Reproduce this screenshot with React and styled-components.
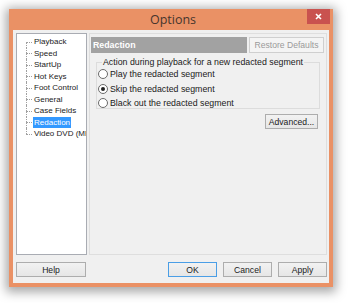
import React from "react";
import styled, { createGlobalStyle } from "styled-components";

const Global = createGlobalStyle`
  html, body { margin: 0; padding: 0; background: #ffffff; }
  body { font-family: "Liberation Sans", Arial, sans-serif; }
`;

const Page = styled.div`
  width: 350px;
  height: 303px;
  padding: 9px 0 0 9px;
  box-sizing: border-box;
  background: #ffffff;
`;

const Window = styled.div`
  width: 324px;
  height: 278px;
  background: #ea9165;
  box-shadow: 0 2px 10px 3px rgba(0, 0, 0, 0.35);
  display: flex;
  flex-direction: column;
  padding: 0 4px 4px 4px;
  box-sizing: border-box;
`;

const TitleBar = styled.div`
  height: 21px;
  position: relative;
  display: flex;
  align-items: center;
  justify-content: center;
  font-family: "Open Sans", "Noto Sans", sans-serif;
  font-size: 12.5px;
  color: #47352d;
  padding-left: 4px;
`;

const CloseBtn = styled.div`
  position: absolute;
  right: -1px;
  top: 0;
  width: 23px;
  height: 15px;
  background: #c9524f;
  color: #fff;
  display: flex;
  align-items: center;
  justify-content: center;
`;

const Client = styled.div`
  flex: 1;
  background: #f0f0f0;
  padding: 3px 2px 6px 3px;
  display: flex;
  flex-direction: column;
  gap: 7px;
`;

const Main = styled.div`
  flex: 1;
  display: flex;
  gap: 2px;
`;

const Tree = styled.div`
  width: 71px;
  box-sizing: border-box;
  background: #fff;
  border: 1px solid #a9acb3;
  padding: 2px 0 0 9px;
  font-size: 8px;
  color: #1a1a1a;
  position: relative;
  overflow: hidden;
`;

const TreeItem = styled.div`
  height: 11.5px;
  display: flex;
  align-items: center;
  position: relative;
  padding-left: 7px;
  white-space: nowrap;
  &::before {
    content: "";
    position: absolute;
    left: 0;
    top: 50%;
    width: 6px;
    border-top: 1px dotted #a0a0a0;
  }
  &::after {
    content: "";
    position: absolute;
    left: 0;
    top: ${(p) => (p.$first ? "50%" : "0")};
    height: ${(p) => (p.$last || p.$first ? "50%" : "100%")};
    border-left: 1px dotted #a0a0a0;
  }
`;

const ItemLabel = styled.span`
  padding: 0 1px;
  line-height: 11px;
  background: ${(p) => (p.$sel ? "#3399ff" : "transparent")};
  color: ${(p) => (p.$sel ? "#fff" : "#1a1a1a")};
`;

const Panel = styled.div`
  flex: 1;
  border: 1px solid #dedede;
  padding: 3px 2px 0 1px;
  display: flex;
  flex-direction: column;
`;

const HeaderRow = styled.div`
  display: flex;
  gap: 2px;
  height: 16px;
`;

const HeaderBar = styled.div`
  flex: 1;
  background: #a2a2a2;
  color: #fff;
  font-weight: bold;
  font-size: 8.8px;
  display: flex;
  align-items: center;
  padding-left: 2px;
`;

const Button = styled.div`
  box-sizing: border-box;
  width: ${(p) => p.$w}px;
  height: ${(p) => p.$h || 16}px;
  border: 1px solid ${(p) => (p.$default ? "#4a9ee6" : p.$disabled ? "#cfcfcf" : "#adadad")};
  background: ${(p) => (p.$disabled ? "#f4f4f4" : "linear-gradient(#f2f2f2, #e6e6e6)")};
  font-size: 8.6px;
  color: ${(p) => (p.$disabled ? "#9a9a9a" : "#1a1a1a")};
  display: flex;
  align-items: center;
  justify-content: center;
  white-space: nowrap;
`;

const Group = styled.fieldset`
  margin: 4px 4px 0 5px;
  border: 1px solid #dcdcdc;
  padding: 0 4px 2px 4px;
  height: 52px;
  box-sizing: border-box;
  font-size: 8.8px;
  color: #1a1a1a;
`;

const Legend = styled.legend`
  padding: 0 1px;
  margin-left: 1px;
`;

const Radio = styled.div`
  display: flex;
  align-items: center;
  height: 14.5px;
  margin-left: -3px;
  gap: 2px;
`;

const Circle = styled.span`
  width: 10px;
  height: 10px;
  border-radius: 50%;
  border: 1px solid #6a6a6a;
  background: #fff;
  box-sizing: border-box;
  display: flex;
  align-items: center;
  justify-content: center;
  &::after {
    content: "";
    width: 4px;
    height: 4px;
    border-radius: 50%;
    background: ${(p) => (p.$on ? "#222" : "transparent")};
  }
`;

const AdvRow = styled.div`
  display: flex;
  justify-content: flex-end;
  padding: 5px 6px 0 0;
`;

const Footer = styled.div`
  display: flex;
  align-items: center;
  gap: 6px;
  height: 15px;
`;

const Spacer = styled.div`
  flex: 1;
`;

const items = [
  "Playback",
  "Speed",
  "StartUp",
  "Hot Keys",
  "Foot Control",
  "General",
  "Case Fields",
  "Redaction",
  "Video DVD (MP",
];

export default function App() {
  return (
    <>
      <Global />
      <Page>
        <Window>
          <TitleBar>
            Options
            <CloseBtn>
              <svg width="7" height="7" viewBox="0 0 7 7">
                <path d="M1 1 L6 6 M6 1 L1 6" stroke="#fff" strokeWidth="1.6" />
              </svg>
            </CloseBtn>
          </TitleBar>
          <Client>
            <Main>
              <Tree>
                {items.map((t, i) => (
                  <TreeItem key={t} $first={i === 0} $last={i === items.length - 1}>
                    <ItemLabel $sel={t === "Redaction"}>{t}</ItemLabel>
                  </TreeItem>
                ))}
              </Tree>
              <Panel>
                <HeaderRow>
                  <HeaderBar>Redaction</HeaderBar>
                  <Button $w={75} $disabled>Restore Defaults</Button>
                </HeaderRow>
                <Group>
                  <Legend>Action during playback for a new redacted segment</Legend>
                  <Radio><Circle />Play the redacted segment</Radio>
                  <Radio><Circle $on />Skip the redacted segment</Radio>
                  <Radio><Circle />Black out the redacted segment</Radio>
                </Group>
                <AdvRow>
                  <Button $w={53} $h={15}>Advanced...</Button>
                </AdvRow>
              </Panel>
            </Main>
            <Footer>
              <Button $w={70} $h={15}>Help</Button>
              <Spacer />
              <Button $w={49} $h={15} $default>OK</Button>
              <Button $w={49} $h={15}>Cancel</Button>
              <Button $w={49} $h={15}>Apply</Button>
            </Footer>
          </Client>
        </Window>
      </Page>
    </>
  );
}
